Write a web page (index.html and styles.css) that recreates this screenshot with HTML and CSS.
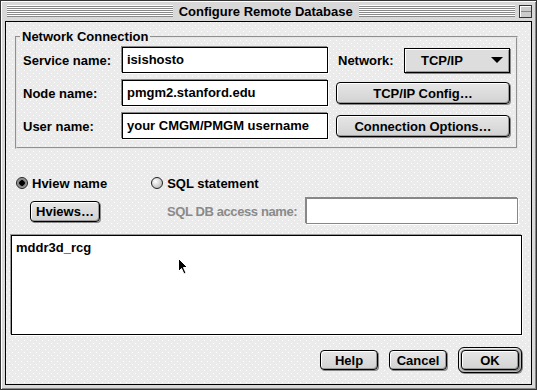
FILE: index.html
```html
<!DOCTYPE html>
<html lang="en">
<head>
    <meta charset="UTF-8">
    <title>Configure Remote Database</title>
    <link rel="stylesheet" href="styles.css">
</head>
<body>
    <div class="window">
        <div class="titlebar">
            <span class="stripes"></span>
            <span class="title">Configure Remote Database</span>
            <span class="stripes"></span>
            <span class="collapse"></span>
        </div>
        <div class="content">
            <fieldset class="group">
                <legend>Network Connection</legend>
                <div class="conn-grid">
                    <label>Service name:</label>
                    <div class="field">isishosto</div>
                    <div class="net">
                        <span class="net-label">Network:</span>
                        <div class="popup"><span class="popup-value">TCP/IP</span><span class="arrow"></span></div>
                    </div>

                    <label>Node name:</label>
                    <div class="field">pmgm2.stanford.edu</div>
                    <button class="btn wide">TCP/IP Config…</button>

                    <label>User name:</label>
                    <div class="field">your CMGM/PMGM username</div>
                    <button class="btn wide">Connection Options…</button>
                </div>
            </fieldset>

            <div class="radio-row">
                <span class="radio-item"><span class="radio checked"></span>Hview name</span>
                <span class="radio-item sql"><span class="radio"></span>SQL statement</span>
            </div>
            <div class="sub-row">
                <button class="btn hviews">Hviews…</button>
                <span class="disabled-label">SQL DB access name:</span>
                <div class="field disabled"></div>
            </div>

            <div class="list">
                mddr3d_rcg
                <svg class="cursor" width="11" height="17" viewBox="0 0 11 17">
                    <path d="M0.5 0.5 L0.5 13.5 L3.5 10.5 L6 16 L8 15 L5.5 9.5 L9.5 9.5 Z" fill="#000" stroke="#fff" stroke-width="1"/>
                </svg>
            </div>

            <div class="actions">
                <button class="btn">Help</button>
                <button class="btn">Cancel</button>
                <span class="default-ring"><button class="btn">OK</button></span>
            </div>
        </div>
    </div>
</body>
</html>
```

FILE: styles.css
```css
body {
    margin: 0;
    padding: 0;
    font-family: "Liberation Sans", Arial, sans-serif;
    font-size: 13px;
    font-weight: bold;
    color: #000;
}
.window {
    width: 537px;
    height: 390px;
    box-sizing: border-box;
    border: 1px solid #333;
    background-color: #d8d8d8;
    box-shadow: inset 1px 1px 0 #fff, inset -1px -1px 0 #888;
    padding: 0 4px 4px 4px;
    display: flex;
    flex-direction: column;
}
.titlebar {
    height: 20px;
    display: flex;
    align-items: center;
    padding: 0 0 0 2px;
}
.stripes {
    flex: 1;
    height: 12px;
    background: repeating-linear-gradient(#fff 0 1px, #888 1px 2px);
}
.stripes:first-child {
    flex: 1.06;
}
.title {
    font-size: 13px;
    padding: 0 6px;
}
.collapse {
    width: 11px;
    height: 11px;
    margin-left: 4px;
    border: 1px solid #333;
    background: linear-gradient(#888, #888) 0 5px / 100% 1px no-repeat, #ccc;
    box-shadow: inset 1px 1px 0 #fff;
}
.content {
    flex: 1;
    border: 1px solid #000;
    background-color: #ebebeb;
    background-image:
        conic-gradient(from 270deg at 1px 1px, #fff 25%, transparent 0),
        conic-gradient(from 270deg at 1px 1px, #fff 25%, transparent 0);
    background-size: 6px 6px;
    background-position: 0 0, 3px 3px;
    display: flex;
    flex-direction: column;
}
.group {
    margin: 7px 13px 0 9px;
    padding: 3px 4px 8px 6px;
    border: 2px groove #e4e4e4;
    min-width: 0;
}
.group legend {
    padding: 0 2px;
    margin-left: -3px;
    line-height: 15px;
}
.conn-grid {
    display: grid;
    grid-template-columns: 91px 206px 174px;
    column-gap: 8px;
    row-gap: 7px;
    grid-auto-rows: 26px;
    align-items: center;
}
.field {
    height: 26px;
    box-sizing: border-box;
    border: 1px solid #000;
    background: #fff;
    box-shadow: -1px -1px 0 #888, 1px 1px 0 #fff;
    padding: 0 4px;
    line-height: 24px;
    white-space: nowrap;
    overflow: hidden;
}
.field.disabled {
    border-color: #888;
    width: 212px;
}
.net {
    display: flex;
    align-items: center;
    margin-left: 2px;
}
.net-label {
    width: 66px;
}
.popup {
    width: 106px;
    height: 25px;
    box-sizing: border-box;
    border: 1px solid #000;
    background: #ddd;
    box-shadow: inset 1px 1px 0 #fff, inset -1px -1px 0 #999, 1px 1px 0 #888;
    display: flex;
    align-items: center;
    padding: 0 6px 0 16px;
}
.popup-value {
    flex: 1;
}
.arrow {
    width: 0;
    height: 0;
    border-left: 6px solid transparent;
    border-right: 6px solid transparent;
    border-top: 6px solid #000;
}
.btn {
    font: inherit;
    color: #000;
    height: 21px;
    box-sizing: border-box;
    border: 1px solid #000;
    border-radius: 4px;
    background: linear-gradient(#e6e6e6, #d2d2d2);
    box-shadow: inset 1px 1px 0 #fff, inset -1px -1px 0 #999, 1px 1px 0 #888;
    padding: 0 8px;
    line-height: 19px;
    white-space: nowrap;
}
.btn.wide {
    width: 174px;
    height: 22px;
}
.radio-row {
    display: flex;
    align-items: center;
    margin-top: 26px;
    padding-left: 10px;
    height: 16px;
}
.radio-item {
    display: flex;
    align-items: center;
    gap: 4px;
}
.radio-item.sql {
    margin-left: 44px;
}
.radio {
    width: 12px;
    height: 12px;
    box-sizing: border-box;
    border-radius: 50%;
    border: 1px solid #222;
    background: radial-gradient(circle at 35% 35%, #fff, #aaa);
}
.radio.checked {
    background: radial-gradient(circle, #000 0 2.5px, #777 3px, #bbb 6px);
}
.sub-row {
    display: flex;
    align-items: center;
    margin-top: 7px;
    height: 26px;
}
.hviews {
    width: 70px;
    margin-left: 24px;
    padding: 0;
}
.disabled-label {
    color: #8a8a8a;
    margin-left: 67px;
    width: 139px;
    letter-spacing: -0.4px;
    white-space: nowrap;
}
.list {
    position: relative;
    margin: 11px 9px 0 5px;
    height: 100px;
    box-sizing: border-box;
    border: 1px solid #000;
    background: #fff;
    box-shadow: 1px 1px 0 #fff, -1px -1px 0 #999;
    padding: 4px 4px;
    line-height: 15px;
}
.cursor {
    position: absolute;
    left: 166px;
    top: 22px;
}
.actions {
    display: flex;
    justify-content: flex-end;
    align-items: center;
    gap: 11px;
    margin: 12px 9px 0 0;
}
.actions .btn {
    width: 58px;
    height: 20px;
    padding: 0;
}
.default-ring {
    display: inline-flex;
    padding: 2px;
    border: 1px solid #000;
    border-radius: 6px;
    background: #bbb;
    box-shadow: inset 1px 1px 0 #eee, 1px 1px 0 #888;
}
```
